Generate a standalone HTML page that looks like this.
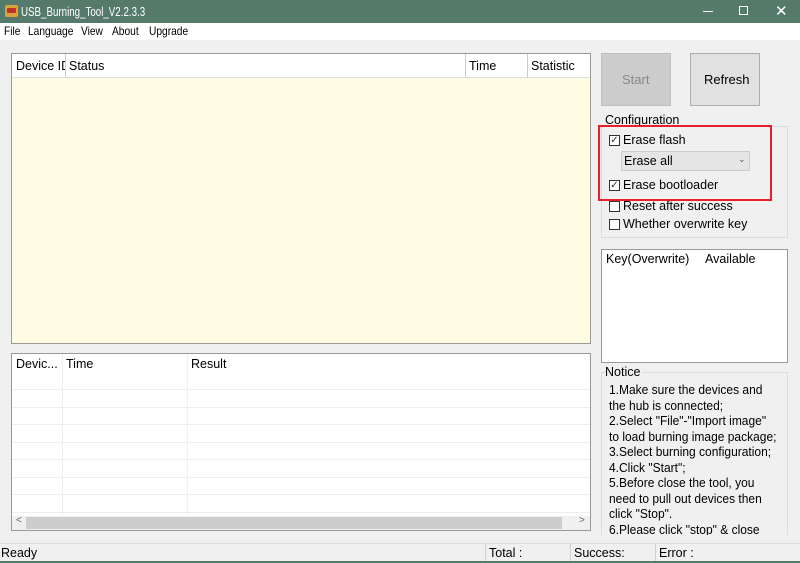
<!DOCTYPE html><html><head><style>
*{margin:0;padding:0;box-sizing:border-box}
body{width:800px;height:563px;background:#f0f0f0;font-family:"Liberation Sans",sans-serif;font-size:12.5px;color:#000;position:relative;overflow:hidden}
.a{position:absolute}
.t{white-space:nowrap}
.m{position:absolute;top:24px;font-size:12px;white-space:nowrap;transform:scaleX(0.85);transform-origin:left}
.cb{position:absolute;width:11px;height:11px;border:1px solid #333;background:#fff;font-size:10px;line-height:9px;text-align:center;color:#333}
</style></head><body>
<div class="a" style="left:0;top:0;width:800px;height:23px;background:#557a6b"></div>
<div class="a" style="left:5px;top:5px;width:13px;height:12px;background:#d9a23a;border-radius:2px"><div class="a" style="left:2px;top:3px;width:9px;height:5px;background:#c0302a;border-radius:1px"></div></div>
<div class="a t" style="left:21px;top:4px;color:#fff;font-size:13px;transform:scaleX(0.75);transform-origin:left">USB_Burning_Tool_V2.2.3.3</div>
<div class="a" style="left:703px;top:11px;width:10px;height:1px;background:#fff"></div>
<div class="a" style="left:739px;top:6px;width:9px;height:9px;border:1px solid #fff"></div>
<div class="a t" style="left:775px;top:2px;color:#fff;font-size:15px">✕</div>
<div class="a" style="left:0;top:23px;width:800px;height:17px;background:#fff"></div>
<div class="m" style="left:4px">File</div>
<div class="m" style="left:28px">Language</div>
<div class="m" style="left:81px">View</div>
<div class="m" style="left:112px">About</div>
<div class="m" style="left:149px">Upgrade</div>

<div class="a" style="left:11px;top:53px;width:580px;height:291px;border:1px solid #999;background:#fefde3"></div>
<div class="a" style="left:12px;top:54px;width:578px;height:24px;background:#fff;border-bottom:1px solid #e0e0e0"></div>
<div class="a" style="left:65px;top:54px;width:1px;height:24px;background:#ccc"></div>
<div class="a" style="left:465px;top:54px;width:1px;height:24px;background:#ccc"></div>
<div class="a" style="left:527px;top:54px;width:1px;height:24px;background:#ccc"></div>
<div class="a t" style="left:16px;top:59px;width:49px;overflow:hidden">Device ID</div>
<div class="a t" style="left:69px;top:59px">Status</div>
<div class="a t" style="left:469px;top:59px">Time</div>
<div class="a t" style="left:531px;top:59px">Statistic</div>

<div class="a" style="left:11px;top:353px;width:580px;height:178px;border:1px solid #999;background:#fff"></div>
<div class="a" style="left:62px;top:354px;width:1px;height:162px;background:#eee"></div>
<div class="a" style="left:187px;top:354px;width:1px;height:162px;background:#eee"></div>
<div class="a" style="left:12px;top:389px;width:578px;height:1px;background:#eee"></div>
<div class="a" style="left:12px;top:407px;width:578px;height:1px;background:#eee"></div>
<div class="a" style="left:12px;top:424px;width:578px;height:1px;background:#eee"></div>
<div class="a" style="left:12px;top:442px;width:578px;height:1px;background:#eee"></div>
<div class="a" style="left:12px;top:459px;width:578px;height:1px;background:#eee"></div>
<div class="a" style="left:12px;top:477px;width:578px;height:1px;background:#eee"></div>
<div class="a" style="left:12px;top:494px;width:578px;height:1px;background:#eee"></div>
<div class="a" style="left:12px;top:512px;width:578px;height:1px;background:#eee"></div>
<div class="a t" style="left:16px;top:357px">Devic...</div>
<div class="a t" style="left:66px;top:357px">Time</div>
<div class="a t" style="left:191px;top:357px">Result</div>
<div class="a" style="left:12px;top:516px;width:578px;height:14px;background:#f0f0f0"></div>
<div class="a" style="left:26px;top:517px;width:536px;height:12px;background:#cdcdcd"></div>
<div class="a t" style="left:16px;top:515px;font-size:10px;color:#666">&lt;</div>
<div class="a t" style="left:579px;top:515px;font-size:10px;color:#666">&gt;</div>

<div class="a" style="left:601px;top:53px;width:70px;height:53px;background:#cccccc;border:1px solid #bfbfbf"></div>
<div class="a t" style="left:622px;top:72px;color:#888;font-size:13px">Start</div>
<div class="a" style="left:690px;top:53px;width:70px;height:53px;background:#e1e1e1;border:1px solid #adadad"></div>
<div class="a t" style="left:704px;top:72px;font-size:13px">Refresh</div>

<div class="a" style="left:601px;top:126px;width:187px;height:112px;border:1px solid #dcdcdc"></div>
<div class="a t" style="left:605px;top:113px;background:#f0f0f0;padding-right:2px">Configuration</div>
<div class="cb" style="left:609px;top:135px">✓</div><div class="a t" style="left:623px;top:133px">Erase flash</div>
<div class="a" style="left:621px;top:151px;width:129px;height:20px;background:#e5e5e5;border:1px solid #ccc"></div>
<div class="a t" style="left:624px;top:154px">Erase all</div>
<div class="a t" style="left:738px;top:154px;font-size:9px;color:#555">⌄</div>
<div class="cb" style="left:609px;top:180px">✓</div><div class="a t" style="left:623px;top:178px">Erase bootloader</div>
<div class="cb" style="left:609px;top:201px"></div><div class="a t" style="left:623px;top:199px">Reset after success</div>
<div class="cb" style="left:609px;top:219px"></div><div class="a t" style="left:623px;top:217px">Whether overwrite key</div>
<div class="a" style="left:598px;top:125px;width:174px;height:76px;border:2px solid #e8202a"></div>

<div class="a" style="left:601px;top:249px;width:187px;height:114px;border:1px solid #999;background:#fff"></div>
<div class="a t" style="left:606px;top:252px">Key(Overwrite)</div>
<div class="a t" style="left:705px;top:252px">Available</div>

<div class="a" style="left:601px;top:372px;width:187px;height:163px;border:1px solid #dcdcdc;border-bottom:none"></div>
<div class="a t" style="left:605px;top:365px;background:#f0f0f0;padding-right:2px">Notice</div>
<div class="a t" style="left:609px;top:383px;line-height:15.5px;font-size:12.5px;transform:scaleX(0.96);transform-origin:left">1.Make sure the devices and<br>the hub is connected;<br>2.Select "File"-"Import image"<br>to load burning image package;<br>3.Select burning configuration;<br>4.Click "Start";<br>5.Before close the tool, you<br>need to pull out devices then<br>click "Stop".<br>6.Please click "stop" &amp; close</div>
<div class="a" style="left:0;top:535px;width:800px;height:8px;background:#f0f0f0"></div>

<div class="a" style="left:0;top:543px;width:800px;height:20px;background:#f0f0f0;border-top:1px solid #dcdcdc"></div>
<div class="a" style="left:485px;top:544px;width:1px;height:19px;background:#d0d0d0"></div>
<div class="a" style="left:570px;top:544px;width:1px;height:19px;background:#d0d0d0"></div>
<div class="a" style="left:655px;top:544px;width:1px;height:19px;background:#d0d0d0"></div>
<div class="a t" style="left:1px;top:546px">Ready</div>
<div class="a t" style="left:489px;top:546px">Total :</div>
<div class="a t" style="left:574px;top:546px">Success:</div>
<div class="a t" style="left:659px;top:546px">Error :</div>
<div class="a" style="left:0;top:561px;width:800px;height:2px;background:#557a6b"></div>
</body></html>
